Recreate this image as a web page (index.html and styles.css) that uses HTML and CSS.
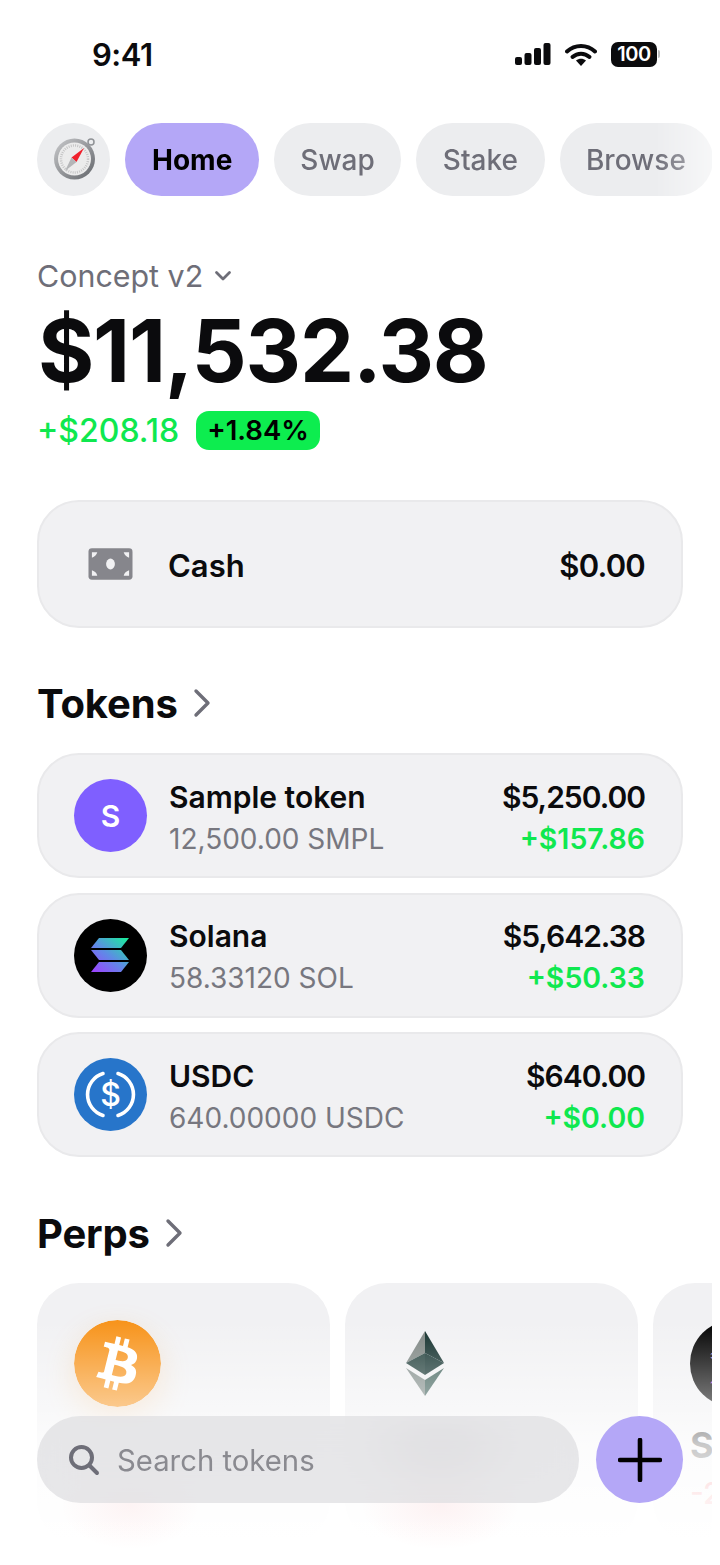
FILE: index.html
```html
<!DOCTYPE html>
<html lang="en">
<head>
    <meta charset="UTF-8">
    <meta name="viewport" content="width=device-width, initial-scale=1.0">
    <title>Wallet Home</title>
    <link rel="stylesheet" href="styles.css">
</head>
<body>
<div class="app">
    <header class="status-bar">
        <span class="status-time">9:41</span>
        <div class="status-icons">
            <svg class="signal" width="36" height="22" viewBox="0 0 36 22">
                <rect x="0" y="14" width="7" height="8" rx="2"/>
                <rect x="9.5" y="10" width="7" height="12" rx="2"/>
                <rect x="19" y="5" width="7" height="17" rx="2"/>
                <rect x="28.5" y="0" width="7" height="22" rx="2"/>
            </svg>
            <svg class="wifi" width="32" height="23" viewBox="0 0 32 23">
                <path d="M2 8.5C10 1 22 1 30 8.5" fill="none" stroke="#0b0b0d" stroke-width="4" stroke-linecap="round"/>
                <path d="M7.5 14C12.5 9.5 19.5 9.500 24.500 14" fill="none" stroke="#0b0b0d" stroke-width="4" stroke-linecap="round"/>
                <path d="M11 17.500C14 15 18 15 21 17.500L16 23Z" fill="#0b0b0d"/>
            </svg>
            <div class="battery">
                <span class="battery-level">100</span>
                <span class="battery-cap"></span>
            </div>
        </div>
    </header>

    <nav class="tabs">
        <div class="tab tab-icon">
            <svg width="46" height="46" viewBox="0 0 46 46">
                <defs>
                    <linearGradient id="rim" x1="0" y1="0" x2="1" y2="1">
                        <stop offset="0" stop-color="#c9cacc"/>
                        <stop offset="1" stop-color="#62656a"/>
                    </linearGradient>
                </defs>
                <circle cx="40" cy="5" r="3" fill="none" stroke="#8f9296" stroke-width="1.500"/>
                <circle cx="23.500" cy="22" r="20.500" fill="url(#rim)"/>
                <circle cx="23.500" cy="22" r="16.500" fill="#ececec"/>
                <circle cx="23.500" cy="22" r="13.500" fill="none" stroke="#c5c5c6" stroke-width="2.500" stroke-dasharray="1 1.200"/>
                <polygon points="33,11 25.500,25 20.500,20.500" fill="#f0202c"/>
                <polygon points="14,34 20.500,20.500 25.500,25" fill="#b4b5b7"/>
            </svg>
        </div>
        <div class="tab tab-active">Home</div>
        <div class="tab">Swap</div>
        <div class="tab tab-stake">Stake</div>
        <div class="tab tab-last">Browse</div>
    </nav>

    <section class="summary">
        <div class="account">
            <span>Concept v2</span>
            <svg width="18" height="12" viewBox="0 0 18 12">
                <path d="M2.500 2.500L9 9L15.500 2.500" fill="none" stroke="#6e6e78" stroke-width="2.800" stroke-linecap="round" stroke-linejoin="round"/>
            </svg>
        </div>
        <div class="total">$11,532.38</div>
        <div class="delta">
            <span class="delta-value">+$208.18</span>
            <span class="delta-badge">+1.84%</span>
        </div>
    </section>

    <section class="cash-card">
        <svg class="cash-icon" width="45" height="32" viewBox="0 0 46 32">
            <rect x="0.500" y="0" width="45" height="32" rx="3.500" fill="#86868c"/>
            <ellipse cx="23" cy="16" rx="4.500" ry="5.500" fill="#f1f1f3"/>
            <path d="M4 4H9.500Q8.500 8 4 9.500Z M42 4H36.500Q37.500 8 42 9.500Z M4 28H9.500Q8.500 24 4 22.500Z M42 28H36.500Q37.500 24 42 22.500Z" fill="#f1f1f3"/>
        </svg>
        <span class="cash-label">Cash</span>
        <span class="cash-value">$0.00</span>
    </section>

    <h2 class="section-title">Tokens
        <svg width="20" height="30" viewBox="0 0 20 30">
            <path d="M4 3L16 15L4 27" fill="none" stroke="#6e6e78" stroke-width="3.400" stroke-linecap="round" stroke-linejoin="round"/>
        </svg>
    </h2>

    <section class="token-list">
        <div class="token-row">
            <div class="token-icon token-sample">S</div>
            <div class="token-info">
                <div class="token-name">Sample token</div>
                <div class="token-amount">12,500.00 SMPL</div>
            </div>
            <div class="token-values">
                <div class="token-price">$5,250.00</div>
                <div class="token-change">+$157.86</div>
            </div>
        </div>
        <div class="token-row">
            <svg class="token-icon" width="73" height="73" viewBox="0 0 73 73">
                <defs>
                    <linearGradient id="sol" gradientUnits="userSpaceOnUse" x1="22" y1="54" x2="52" y2="17">
                        <stop offset="0" stop-color="#9b45ff"/>
                        <stop offset="0.450" stop-color="#5f8ae6"/>
                        <stop offset="1" stop-color="#17f09a"/>
                    </linearGradient>
                </defs>
                <circle cx="36.500" cy="36.500" r="36.500" fill="#000"/>
                <polygon points="25,19 55,19 47,29 17,29" fill="url(#sol)"/>
                <polygon points="17,31 47,31 55,41 25,41" fill="url(#sol)"/>
                <polygon points="25,43 55,43 47,53 17,53" fill="url(#sol)"/>
            </svg>
            <div class="token-info">
                <div class="token-name">Solana</div>
                <div class="token-amount">58.33120 SOL</div>
            </div>
            <div class="token-values">
                <div class="token-price">$5,642.38</div>
                <div class="token-change">+$50.33</div>
            </div>
        </div>
        <div class="token-row">
            <svg class="token-icon" width="73" height="73" viewBox="0 0 73 73">
                <circle cx="36.500" cy="36.500" r="36.500" fill="#2775ca"/>
                <path d="M29 15.500A22 22 0 0 0 29 57.500 M44 15.500A22 22 0 0 1 44 57.500" fill="none" stroke="#fff" stroke-width="3.600" stroke-linecap="round"/>
                <text class="usdc-sign" x="36.500" y="47.500" text-anchor="middle">$</text>
            </svg>
            <div class="token-info">
                <div class="token-name">USDC</div>
                <div class="token-amount">640.00000 USDC</div>
            </div>
            <div class="token-values">
                <div class="token-price">$640.00</div>
                <div class="token-change">+$0.00</div>
            </div>
        </div>
    </section>

    <h2 class="section-title perps-title">Perps
        <svg width="20" height="30" viewBox="0 0 20 30">
            <path d="M4 3L16 15L4 27" fill="none" stroke="#6e6e78" stroke-width="3.400" stroke-linecap="round" stroke-linejoin="round"/>
        </svg>
    </h2>

    <section class="perp-list">
        <div class="perp-card">
            <svg class="perp-icon perp-btc" width="87" height="87" viewBox="0 0 32 32">
                <circle cx="16" cy="16" r="16" fill="#f7931a"/>
                <path fill="#fff" d="M23.189 14.02c.314-2.096-1.283-3.223-3.465-3.975l.708-2.84-1.728-.43-.69 2.765c-.454-.114-.92-.22-1.385-.326l.695-2.783L15.596 6l-.708 2.839c-.376-.086-.746-.17-1.104-.26l.002-.009-2.384-.595-.46 1.846s1.283.294 1.256.312c.7.175.826.638.805 1.006l-.806 3.235c.048.012.11.03.18.057l-.183-.045-1.13 4.532c-.086.212-.303.531-.793.41.018.025-1.256-.313-1.256-.313l-.858 1.978 2.25.561c.418.105.828.215 1.231.318l-.715 2.872 1.727.43.708-2.84c.472.127.93.245 1.378.357l-.706 2.828 1.728.43.715-2.866c2.948.558 5.164.333 6.097-2.333.752-2.146-.037-3.385-1.588-4.192 1.13-.26 1.98-1.003 2.207-2.538zm-3.95 5.538c-.533 2.147-4.148.986-5.32.695l.95-3.805c1.172.293 4.929.872 4.37 3.11zm.535-5.569c-.487 1.953-3.495.96-4.47.717l.86-3.45c.975.243 4.118.696 3.61 2.733z"/>
            </svg>
        </div>
        <div class="perp-card">
            <svg class="perp-icon" width="87" height="87" viewBox="0 0 87 87">
                <polygon points="43,11 24,43 43,33" fill="#7b8380"/>
                <polygon points="43,11 62,43 43,33" fill="#0c2a27"/>
                <polygon points="24,43 43,33 43,55" fill="#1f3d39"/>
                <polygon points="62,43 43,33 43,55" fill="#143330"/>
                <polygon points="24,48 43,60 43,76" fill="#7e8a87"/>
                <polygon points="62,48 43,60 43,76" fill="#3d5f58"/>
            </svg>
        </div>
        <div class="perp-card">
            <svg class="perp-icon" width="87" height="87" viewBox="0 0 73 73">
                <circle cx="36.500" cy="36.500" r="36.500" fill="#000"/>
                <polygon points="25,19 55,19 47,29 17,29" fill="url(#sol)"/>
                <polygon points="17,31 47,31 55,41 25,41" fill="url(#sol)"/>
                <polygon points="25,43 55,43 47,53 17,53" fill="url(#sol)"/>
            </svg>
            <div class="perp-name">S</div>
            <div class="perp-change">-2</div>
        </div>
    </section>

    <div class="dock">
        <div class="search-bar">
            <svg width="32" height="32" viewBox="0 0 32 32">
                <circle cx="13.500" cy="13.500" r="10.500" fill="none" stroke="#6e6e78" stroke-width="4"/>
                <path d="M21.500 21.500L29 29" fill="none" stroke="#6e6e78" stroke-width="4" stroke-linecap="round"/>
            </svg>
            <span class="search-text">Search tokens</span>
        </div>
        <div class="add-button">
            <svg width="44" height="44" viewBox="0 0 44 44">
                <path d="M22 2V42M2 22H42" fill="none" stroke="#000" stroke-width="4.600" stroke-linecap="round"/>
            </svg>
        </div>
    </div>
</div>
</body>
</html>
```

FILE: styles.css
```css
/* General Styles */
body {
    margin: 0;
    padding: 0;
    background-color: #fff;
    font-family: Inter, "Liberation Sans", sans-serif;
    color: #0b0b0d;
}

.app {
    position: relative;
    width: 712px;
    height: 1565px;
    overflow: hidden;
    background-color: #fff;
}

/* Status Bar */
.status-bar {
    display: flex;
    justify-content: space-between;
    align-items: center;
    height: 108px;
    padding: 0 52px 0 92px;
}

.status-time {
    font-size: 31px;
    font-weight: 600;
    letter-spacing: -0.5px;
}

.status-icons {
    display: flex;
    align-items: center;
    gap: 14px;
}

.signal {
    fill: #0b0b0d;
}

.battery {
    display: flex;
    align-items: center;
    gap: 1px;
}

.battery-level {
    width: 46px;
    height: 25px;
    line-height: 25px;
    border-radius: 7px;
    background-color: #0b0b0d;
    color: #fff;
    font-size: 20px;
    font-weight: 600;
    text-align: center;
    letter-spacing: -0.5px;
}

.battery-cap {
    width: 2px;
    height: 8px;
    border-radius: 0 2px 2px 0;
    background-color: #bdbdbd;
}

/* Tabs */
.tabs {
    display: flex;
    gap: 15px;
    height: 73px;
    margin-top: 15px;
    padding-left: 37px;
    -webkit-mask-image: linear-gradient(to right, #000 655px, rgba(0, 0, 0, 0.45) 712px);
    mask-image: linear-gradient(to right, #000 655px, rgba(0, 0, 0, 0.45) 712px);
}

.tab {
    display: flex;
    align-items: center;
    justify-content: center;
    flex: none;
    box-sizing: border-box;
    height: 73px;
    padding: 0 26px;
    border-radius: 37px;
    background-color: #ecedef;
    color: #6e6e78;
    font-size: 28px;
    font-weight: 500;
}

.tab-icon {
    width: 73px;
    padding: 0;
}

.tab-active {
    padding: 0 27px;
    background-color: #b4a7f7;
    color: #000;
    font-weight: 700;
}

.tab-stake {
    padding: 0 27px;
}

.tab-last {
    width: 153px;
    justify-content: flex-start;
}

/* Balance Summary */
.summary {
    margin-top: 62px;
    padding-left: 37px;
}

.account {
    display: flex;
    align-items: center;
    gap: 11px;
    height: 36px;
    color: #6e6e78;
    font-size: 30.4px;
}

.total {
    height: 90px;
    margin-top: 12px;
    padding-left: 1px;
    line-height: 90px;
    font-size: 86px;
    font-weight: 700;
    letter-spacing: -1.2px;
}

.delta {
    display: flex;
    align-items: center;
    gap: 17px;
    height: 39px;
    margin-top: 15px;
}

.delta-value {
    color: #0fe84f;
    font-size: 32px;
    font-weight: 500;
}

.delta-badge {
    height: 39px;
    padding: 0 11px;
    line-height: 39px;
    border-radius: 13px;
    background-color: #0ded4f;
    color: #000;
    font-size: 27.5px;
    font-weight: 600;
}

/* Cash Card */
.cash-card {
    display: flex;
    align-items: center;
    box-sizing: border-box;
    height: 128px;
    margin: 50px 29px 0 37px;
    padding: 0 36px 0 49px;
    border: 2px solid #e9e9eb;
    border-radius: 42px;
    background-color: #f1f1f3;
}

.cash-label {
    margin: 2px 0 0 35px;
    font-size: 31px;
    font-weight: 600;
}

.cash-value {
    margin: 2px 0 0 auto;
    font-size: 31px;
    font-weight: 600;
    letter-spacing: -0.8px;
}

/* Section Titles */
.section-title {
    display: flex;
    align-items: center;
    gap: 14px;
    height: 46px;
    margin: 52px 0 0 0;
    padding-left: 37px;
    font-size: 40px;
    font-weight: 700;
    letter-spacing: -0.15px;
}

.perps-title {
    margin-top: 53px;
}

/* Token Rows */
.token-list {
    display: flex;
    flex-direction: column;
    gap: 14.5px;
    margin: 27px 29px 0 37px;
}

.token-row {
    display: flex;
    align-items: center;
    box-sizing: border-box;
    height: 125px;
    padding: 0 36px 0 35px;
    border: 2px solid #e9e9eb;
    border-radius: 42px;
    background-color: #f1f1f3;
}

.token-icon {
    flex: none;
    width: 73px;
    height: 73px;
}

.token-sample {
    display: flex;
    align-items: center;
    justify-content: center;
    border-radius: 50%;
    background-color: #7f5fff;
    color: #fff;
    font-size: 30px;
    font-weight: 600;
}

.usdc-sign {
    fill: #fff;
    font-size: 32px;
    font-weight: 500;
}

.token-info {
    margin: 4px 0 0 22px;
}

.token-name,
.token-price {
    height: 42px;
    line-height: 42px;
    font-size: 30px;
    font-weight: 600;
}

.token-price {
    letter-spacing: -1px;
}

.token-amount,
.token-change {
    height: 42px;
    line-height: 42px;
    font-size: 28px;
}

.token-amount {
    color: #77777f;
}

.token-values {
    margin: 4px 0 0 auto;
    text-align: right;
}

.token-change {
    color: #0fe84f;
    font-size: 28.5px;
    font-weight: 600;
}

/* Perps Cards */
.perp-list {
    display: flex;
    gap: 15px;
    margin-top: 27px;
    padding-left: 37px;
}

.perp-card {
    flex: none;
    box-sizing: border-box;
    width: 293px;
    height: 260px;
    padding: 37px 0 0 37px;
    border-radius: 42px;
    background-color: #f1f1f3;
}

.perp-icon {
    display: block;
}

.perp-btc {
    border-radius: 50%;
    box-shadow: 0 12px 30px rgba(247, 147, 26, 0.22);
}

.perp-name {
    margin-top: 16px;
    font-size: 36px;
    font-weight: 700;
}

.perp-change {
    margin-top: 8px;
    color: #f0323c;
    font-size: 30px;
    font-weight: 500;
}

/* Bottom Dock */
.dock {
    position: absolute;
    left: 0;
    right: 0;
    bottom: 0;
    display: flex;
    align-items: flex-end;
    gap: 17px;
    height: 265px;
    padding: 0 29px 62px 37px;
    box-sizing: border-box;
    background:
        radial-gradient(ellipse 70px 45px at 130px 205px, rgba(240, 50, 60, 0.05), transparent),
        radial-gradient(ellipse 80px 45px at 440px 205px, rgba(240, 50, 60, 0.06), transparent),
        radial-gradient(ellipse 90px 30px at 440px 150px, rgba(60, 40, 50, 0.16), transparent),
        linear-gradient(to bottom,
            rgba(255, 255, 255, 0) 20px,
            rgba(255, 255, 255, 0.5) 107px,
            rgba(255, 255, 255, 0.78) 145px,
            rgba(255, 255, 255, 0.9) 190px,
            #fff 240px);
}

.search-bar {
    display: flex;
    align-items: center;
    gap: 17px;
    box-sizing: border-box;
    width: 542px;
    height: 87px;
    padding-left: 31px;
    border-radius: 44px;
    background-color: rgba(222, 222, 225, 0.72);
    -webkit-backdrop-filter: blur(18px);
    backdrop-filter: blur(18px);
    color: #8a8a90;
    font-size: 29.3px;
}

.search-text {
    padding-top: 2px;
}

.add-button {
    display: flex;
    align-items: center;
    justify-content: center;
    flex: none;
    width: 87px;
    height: 87px;
    border-radius: 50%;
    background-color: #b4a7f7;
}
```
